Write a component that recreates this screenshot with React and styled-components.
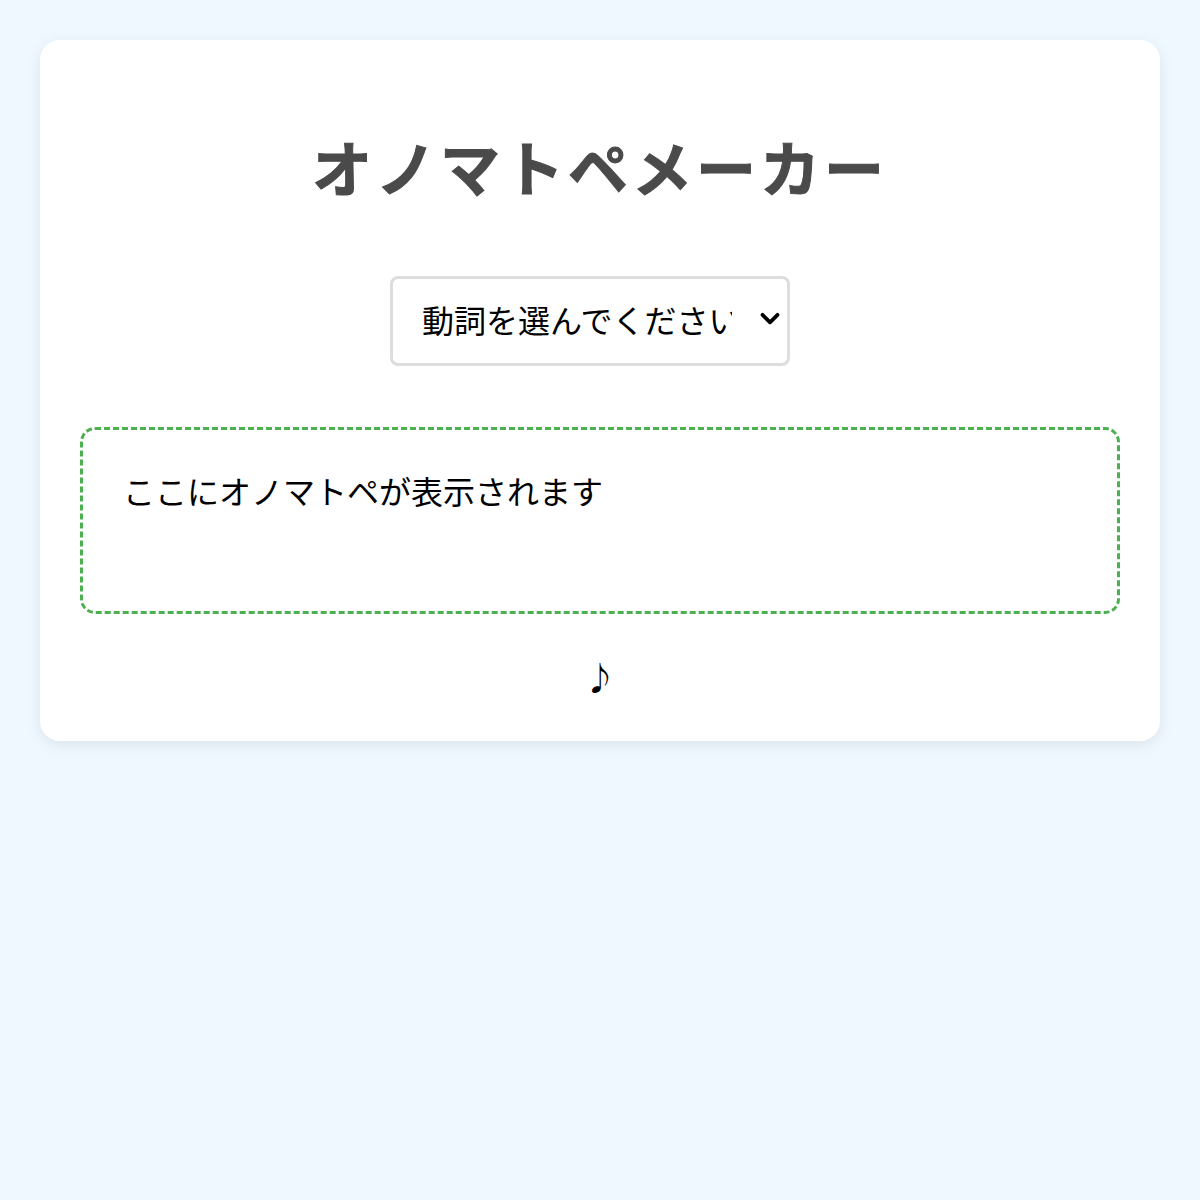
import styled, { createGlobalStyle } from "styled-components";
import { ChevronDown } from "lucide-react";

const GlobalStyle = createGlobalStyle`
  body {
    margin: 0;
    padding: 40px;
    background: #f0f8ff;
    font-family: "Noto Sans CJK JP", "Noto Sans", sans-serif;
  }
`;

const Card = styled.div`
  background: #fff;
  border-radius: 20px;
  padding: 40px 40px 42px;
  box-shadow: 0 4px 15px rgba(0, 0, 0, 0.08);
  display: flex;
  flex-direction: column;
  align-items: center;
`;

const Title = styled.h1`
  margin: 50px 0 0;
  font-size: 60px;
  line-height: 72px;
  font-weight: 700;
  letter-spacing: 4px;
  color: #4a4a4a;
  -webkit-text-stroke: 1px #4a4a4a;
`;

const SelectWrap = styled.div`
  position: relative;
  margin-top: 74px;
  margin-right: 20px;
`;

const VerbSelect = styled.select`
  display: block;
  appearance: none;
  -webkit-appearance: none;
  width: 400px;
  height: 90px;
  box-sizing: border-box;
  padding: 0 55px 5px 29px;
  font-family: inherit;
  font-size: 32px;
  color: #000;
  background: #fff;
  border: 3px solid #ddd;
  border-radius: 8px;
`;

const Arrow = styled(ChevronDown)`
  position: absolute;
  right: 5px;
  top: 50%;
  transform: translateY(-58%);
  pointer-events: none;
  color: #000;
`;

const ResultBox = styled.div`
  align-self: stretch;
  margin-top: 61px;
  min-height: 100px;
  padding: 37px 40px 44px;
  border: 3px dashed #4caf50;
  border-radius: 15px;
  font-size: 32px;
  line-height: 46px;
  color: #000;
`;

const Note = styled.div`
  margin-top: 39px;
  font-size: 32px;
  line-height: 46px;
  color: #000;
`;

export default function App() {
  return (
    <>
      <GlobalStyle />
      <Card>
        <Title>オノマトペメーカー</Title>
        <SelectWrap>
          <VerbSelect defaultValue="">
            <option value="">動詞を選んでください</option>
            <option value="walk">歩く</option>
            <option value="run">走る</option>
            <option value="eat">食べる</option>
          </VerbSelect>
          <Arrow size={30} strokeWidth={3} />
        </SelectWrap>
        <ResultBox>ここにオノマトペが表示されます</ResultBox>
        <Note>♪</Note>
      </Card>
    </>
  );
}
